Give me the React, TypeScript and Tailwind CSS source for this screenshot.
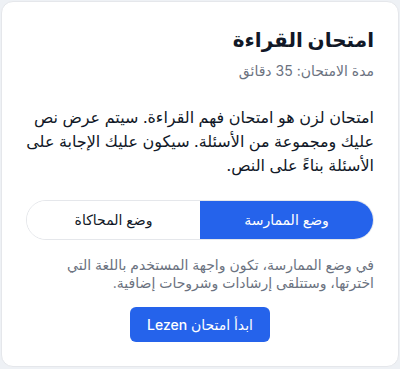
import React from "react";

export default function App() {
  return (
    <div
      className="w-[400px] h-[369px] bg-[#eef1f5] p-px"
      style={{ fontFamily: 'Inter, "DejaVu Sans", sans-serif' }}
    >
      <div
        dir="rtl"
        className="h-[366px] bg-white rounded-xl border border-[#e5e7eb] px-6 pt-6 pb-6 flex flex-col"
      >
        <h1 className="text-xl leading-7 font-bold text-[#111827]">امتحان القراءة</h1>
        <p className="mt-[7px] text-sm leading-5 text-[#6b7280]">مدة الامتحان: 35 دقائق</p>
        <p className="mt-6 text-base leading-6 text-[#111827]">
          امتحان لزن هو امتحان فهم القراءة. سيتم عرض نص عليك ومجموعة من الأسئلة. سيكون عليك الإجابة على الأسئلة بناءً على النص.
        </p>
        <div className="mt-[23px] flex h-10 rounded-full border border-[#e5e7eb] overflow-hidden">
          <button className="flex-1 bg-[#2563eb] text-white text-sm">وضع الممارسة</button>
          <button className="flex-1 bg-white text-[#111827] text-sm">وضع المحاكاة</button>
        </div>
        <p className="mt-4 text-sm leading-[18px] text-[#6b7280]">
          في وضع الممارسة، تكون واجهة المستخدم باللغة التي اخترتها، وستتلقى إرشادات وشروحات إضافية.
        </p>
        <div className="mt-auto flex justify-center">
          <button className="h-[35px] px-[17px] rounded-md bg-[#2563eb] text-white text-sm font-medium">
            ابدأ امتحان Lezen
          </button>
        </div>
      </div>
    </div>
  );
}
